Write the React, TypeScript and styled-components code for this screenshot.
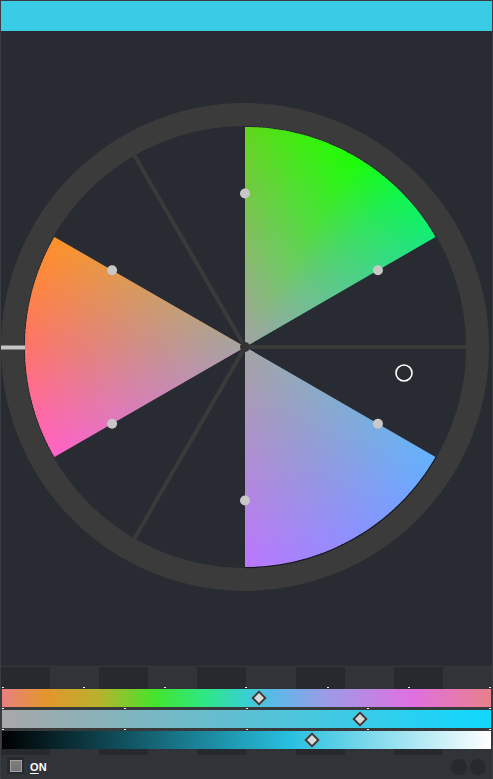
import React from 'react';
import styled, { createGlobalStyle } from 'styled-components';

const GlobalStyle = createGlobalStyle`
  html, body { margin: 0; padding: 0; background: #282b31; }
  body { font-family: "Liberation Sans", Arial, sans-serif; }
`;

const Frame = styled.div`
  width: 493px;
  height: 779px;
  box-sizing: border-box;
  border: 1px solid #3a3d42;
  border-bottom: none;
  display: flex;
  flex-direction: column;
  background: #282b31;
  overflow: hidden;
`;

const TopBar = styled.div`
  height: 30px;
  flex: none;
  background: #3acbe6;
`;

const WheelArea = styled.div`
  height: 635px;
  flex: none;
  display: flex;
  justify-content: center;
  align-items: center;
  border-bottom: 1px solid #34373c;
`;

const Panel = styled.div`
  flex: 1;
  display: flex;
  flex-direction: column;
  background: #303439;
`;

const BlockStrip = styled.div`
  height: 88px;
  box-sizing: border-box;
  padding-top: 20px;
  background: repeating-linear-gradient(90deg, #26292e 0px, #26292e 49px, #303439 49px, #303439 98.2px);
`;

const SliderStack = styled.div`
  display: flex;
  flex-direction: column;
`;

const TickRow = styled.div<{ $first?: boolean }>`
  height: ${(p) => (p.$first ? 2 : 3)}px;
  padding: 0 1px;
  display: flex;
  justify-content: space-between;
  align-items: flex-start;
  background: ${(p) => (p.$first ? 'transparent' : '#38393b')};
`;

const Tick = styled.span<{ $first?: boolean }>`
  width: 2px;
  height: 1px;
  margin-top: ${(p) => (p.$first ? 0 : 1)}px;
  background: #f2f2f2;
`;

const TrackRow = styled.div`
  padding: 0 1px;
  background: #38393b;
`;

const Track = styled.div<{ $bg: string }>`
  position: relative;
  height: 18px;
  background: ${(p) => p.$bg};
`;

const Thumb = styled.div`
  position: absolute;
  top: 50%;
  width: 11px;
  height: 11px;
  box-sizing: border-box;
  border: 2px solid #3a3a3a;
  background: #d8d8d8;
  transform: translate(-50%, -50%) rotate(45deg);
`;

const BottomBar = styled.div`
  height: 24px;
  display: flex;
  align-items: center;
  padding: 0 6px;
`;

const CheckOuter = styled.div`
  width: 17px;
  height: 17px;
  box-sizing: border-box;
  padding: 3px;
  margin-top: -3px;
  background: #26292e;
`;

const CheckInner = styled.div`
  width: 12px;
  height: 12px;
  box-sizing: border-box;
  border: 1px solid #a0a0a0;
  background: linear-gradient(180deg, #7e7e7e, #727272);
`;

const Label = styled.span`
  margin-left: 6px;
  color: #ffffff;
  font-weight: bold;
  font-size: 11px;
  letter-spacing: 0.2px;
  u { text-decoration-thickness: 1px; text-underline-offset: 2px; }
`;

const Knobs = styled.div`
  margin-left: auto;
  display: flex;
  gap: 3px;
`;

const Knob = styled.div`
  width: 16px;
  height: 16px;
  border-radius: 50%;
  background: #26292e;
`;

const CX = 244;
const CY = 316;
const R = 220;

const pt = (r: number, deg: number): [number, number] => {
  const a = (deg * Math.PI) / 180;
  return [CX + r * Math.sin(a), CY - r * Math.cos(a)];
};

const wedge = (a0: number, a1: number, r = R) => {
  const [x0, y0] = pt(r, a0);
  const [x1, y1] = pt(r, a1);
  return `M${CX} ${CY} L${x0.toFixed(2)} ${y0.toFixed(2)} A${r} ${r} 0 0 1 ${x1.toFixed(2)} ${y1.toFixed(2)} Z`;
};

const hex = (h: string) => [1, 3, 5].map((i) => parseInt(h.slice(i, i + 2), 16));

const colorAt = (stops: [number, string][], a: number) => {
  for (let i = 0; i < stops.length - 1; i++) {
    const [a0, c0] = stops[i];
    const [a1, c1] = stops[i + 1];
    if (a >= a0 && a <= a1) {
      const t = (a - a0) / (a1 - a0);
      const p = hex(c0);
      const q = hex(c1);
      const m = p.map((v, k) => Math.round(v + (q[k] - v) * t));
      return `rgb(${m[0]},${m[1]},${m[2]})`;
    }
  }
  return stops[stops.length - 1][1];
};

type Sector = { from: number; to: number; stops: [number, string][] };

const sectors: Sector[] = [
  { from: 0, to: 60, stops: [[0, '#62d61c'], [15, '#3cee0e'], [30, '#1cff04'], [45, '#0ff64a'], [60, '#12ec7a']] },
  { from: 120, to: 180, stops: [[120, '#62b2ff'], [150, '#8c90ff'], [180, '#bc76ff']] },
  { from: 240, to: 300, stops: [[240, '#ff62c8'], [255, '#ff6a9a'], [270, '#ff7468'], [285, '#ff8244'], [300, '#ff9226']] },
];

const ColorWheel: React.FC = () => {
  const spokes = [90, 210, 270, 330];
  const dots = [0, 60, 120, 180, 240, 300];
  return (
    <svg width={491} height={635} viewBox="0 0 491 635">
      <defs>
        <radialGradient id="desat" gradientUnits="userSpaceOnUse" cx={CX} cy={CY} r={R}>
          <stop offset="0" stopColor="#a5a5a5" stopOpacity={1} />
          <stop offset="1" stopColor="#a5a5a5" stopOpacity={0} />
        </radialGradient>
      </defs>
      <circle cx={CX} cy={CY} r={232.5} fill="none" stroke="#3b3b3b" strokeWidth={23} />
      {spokes.map((a) => {
        const [x, y] = pt(221, a);
        return <line key={a} x1={CX} y1={CY} x2={x} y2={y} stroke="#3a3a3a" strokeWidth={4} />;
      })}
      {sectors.map((s) => {
        const parts: React.ReactNode[] = [];
        for (let a = s.from; a < s.to; a += 1) {
          const end = Math.min(a + 1.6, s.to);
          parts.push(<path key={a} d={wedge(a, end)} fill={colorAt(s.stops, a + 0.5)} />);
        }
        return (
          <g key={s.from}>
            {parts}
            <path d={wedge(s.from, s.to)} fill="url(#desat)" />
          </g>
        );
      })}
      <path
        d={`M${pt(220.6, 120)[0]} ${pt(220.6, 120)[1]} A220.6 220.6 0 0 1 ${pt(220.6, 180)[0]} ${pt(220.6, 180)[1]}`}
        fill="none"
        stroke="rgba(10,10,14,0.55)"
        strokeWidth={1.2}
      />
      <rect x={0} y={314.5} width={24} height={4} fill="#c6c6c6" />
      <circle cx={CX} cy={CY} r={5} fill="#333333" />
      {dots.map((a) => {
        const [x, y] = pt(153.5, a);
        return <circle key={a} cx={x} cy={y} r={5} fill="#c8c8c8" />;
      })}
      <circle cx={403} cy={342} r={8} fill="none" stroke="#ffffff" strokeWidth={1.6} />
    </svg>
  );
};

type SliderProps = { bg: string; value: number; ticks: number; first?: boolean };

const Slider: React.FC<SliderProps> = ({ bg, value, ticks, first }) => (
  <>
    <TickRow $first={first}>
      {Array.from({ length: ticks }).map((_, i) => (
        <Tick key={i} $first={first} />
      ))}
    </TickRow>
    <TrackRow>
      <Track $bg={bg}>
        <Thumb style={{ left: `${value}%` }} />
      </Track>
    </TrackRow>
  </>
);

const HUE_BG =
  'linear-gradient(90deg, #e88080 0%, #e3962c 9%, #b8b22e 20%, #45e42a 31%, #2ee880 41%, #38d0d2 50%, #5cb8e8 56%, #9a9ce6 66%, #e070e0 84%, #e8808a 100%)';
const SAT_BG = 'linear-gradient(90deg, #a8a8a8 0%, #10d8ff 100%)';
const VAL_BG = 'linear-gradient(90deg, #000000 0%, #28c0e0 59%, #ffffff 100%)';

export default function App() {
  return (
    <>
      <GlobalStyle />
      <Frame>
        <TopBar />
        <WheelArea>
          <ColorWheel />
        </WheelArea>
        <Panel>
          <BlockStrip>
            <SliderStack>
              <Slider first bg={HUE_BG} value={52.6} ticks={7} />
              <Slider bg={SAT_BG} value={73.2} ticks={5} />
              <Slider bg={VAL_BG} value={63.4} ticks={5} />
            </SliderStack>
          </BlockStrip>
          <BottomBar>
            <CheckOuter>
              <CheckInner />
            </CheckOuter>
            <Label>
              <u>O</u>N
            </Label>
            <Knobs>
              <Knob />
              <Knob />
            </Knobs>
          </BottomBar>
        </Panel>
      </Frame>
    </>
  );
}
